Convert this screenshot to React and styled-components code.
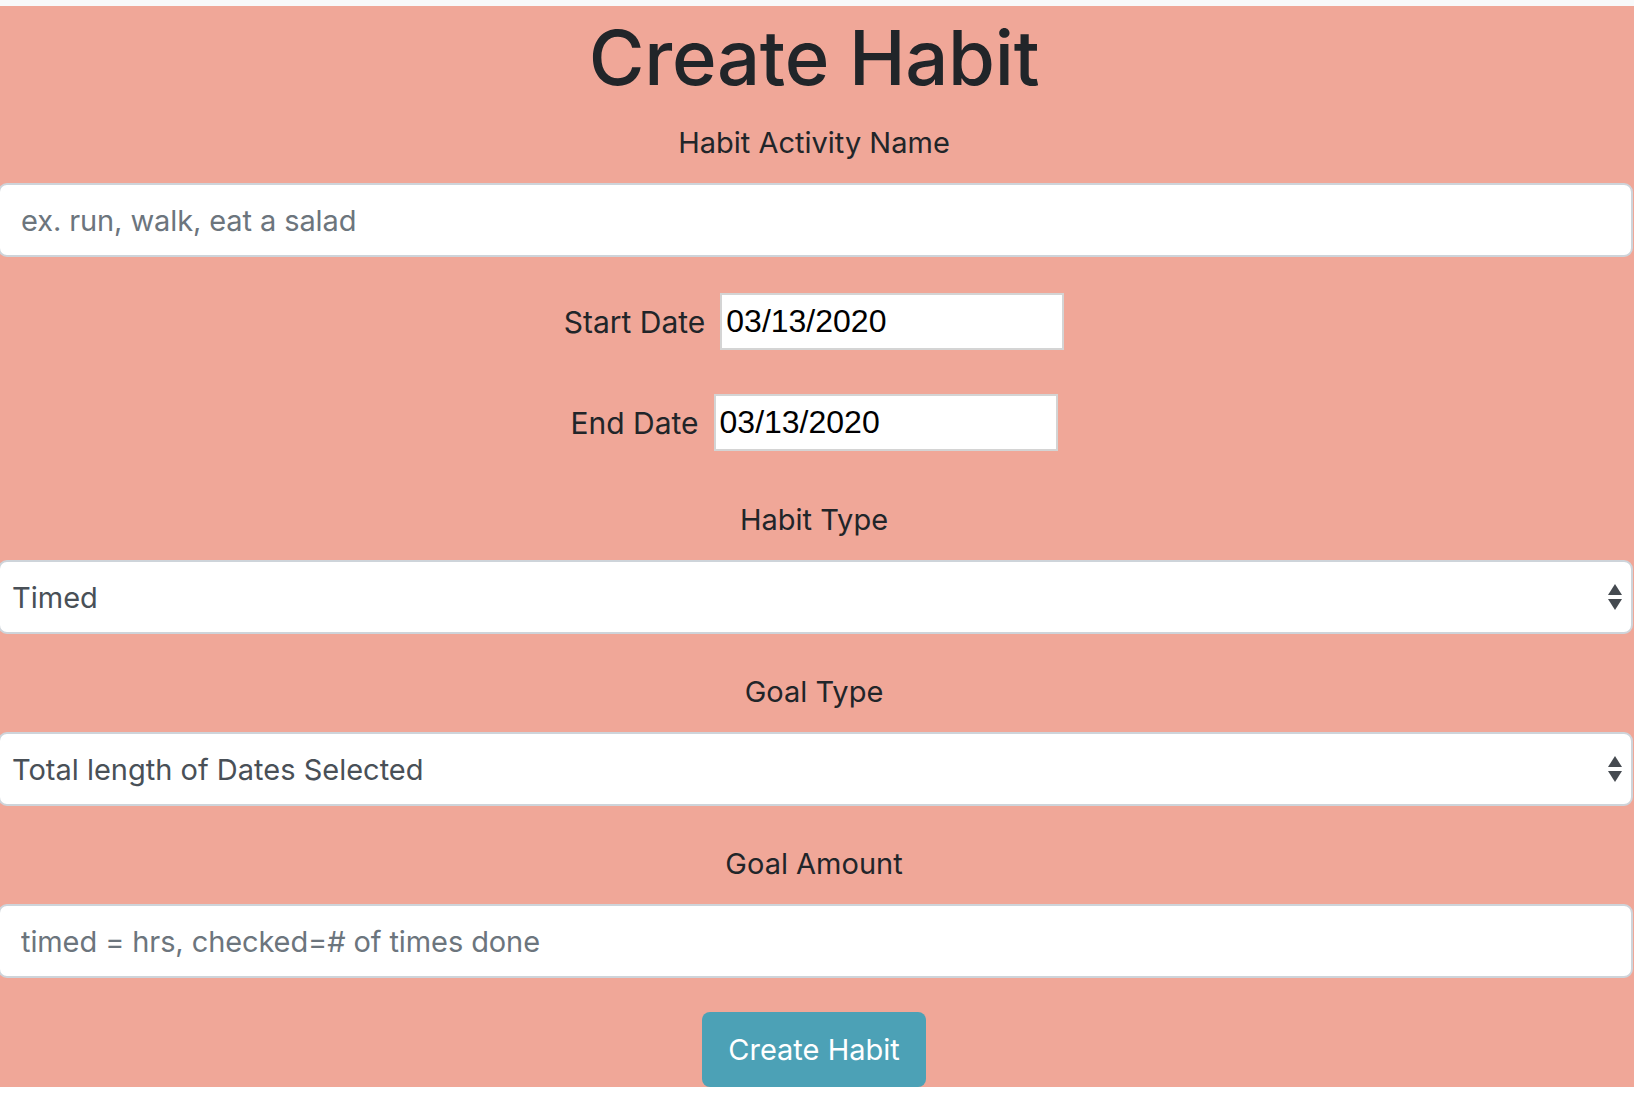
import React from 'react';
import styled, { createGlobalStyle } from 'styled-components';

const GlobalStyle = createGlobalStyle`
    html, body {
        margin: 0;
        padding: 0;
        background: #ffffff;
        font-family: Inter, "Noto Sans", sans-serif;
        color: #212529;
        overflow: hidden;
    }
    * {
        box-sizing: border-box;
    }
`;

const TopStrip = styled.div`
    height: 6px;
    background: #f8f9fa;
`;

const Form = styled.form`
    display: flex;
    flex-direction: column;
    align-items: center;
    background: #f0a798;
    margin: 0;
    padding-right: 6px;
`;

const Title = styled.h1`
    margin: 0;
    height: 100px;
    line-height: 102px;
    font-size: 76px;
    font-weight: 500;
    letter-spacing: -0.3px;
    color: #212529;
`;

const Label = styled.label`
    display: block;
    margin-top: ${(props) => props.top || 0}px;
    height: 36px;
    line-height: 36px;
    font-size: 29px;
    font-weight: 400;
    color: #212529;
    text-align: center;
`;

const TextInput = styled.input`
    display: block;
    width: calc(100% + 7px);
    margin: 22px -5px 0 -2px;
    height: 74px;
    padding: 0 21px;
    border: 2px solid #ced4da;
    border-radius: 9px;
    background: #ffffff;
    font-family: Inter, "Noto Sans", sans-serif;
    font-size: 29px;
    letter-spacing: -0.1px;
    color: #495057;
    outline: none;

    &::placeholder {
        color: #6c757d;
        opacity: 1;
    }
`;

const SelectWrap = styled.div`
    position: relative;
    width: calc(100% + 7px);
    margin: 22px -5px 0 -2px;
`;

const Select = styled.select`
    display: block;
    width: 100%;
    height: 74px;
    padding: 0 12px;
    border: 2px solid #ced4da;
    border-radius: 9px;
    background: #ffffff;
    appearance: none;
    font-family: Inter, "Noto Sans", sans-serif;
    font-size: 29px;
    color: #495057;
    outline: none;
`;

const SelectArrows = styled.svg`
    position: absolute;
    right: 10px;
    top: 50%;
    transform: translateY(-50%);
    pointer-events: none;
`;

const DateRow = styled.div`
    display: flex;
    align-items: center;
    gap: 15px;
    margin-top: ${(props) => props.top}px;
`;

const DateLabel = styled.label`
    font-size: 30px;
    color: #212529;
`;

const DateInput = styled.input`
    width: 344px;
    height: 57px;
    padding: 0 4px;
    border: 2px solid #d4d4d4;
    border-radius: 0;
    background: #ffffff;
    font-family: "Liberation Sans", Arial, sans-serif;
    font-size: 32px;
    color: #000000;
    outline: none;
`;

const SubmitButton = styled.button`
    margin-top: 34px;
    height: 75px;
    padding: 0 26px;
    border: none;
    border-radius: 8px;
    background: #4ca1b6;
    color: #ffffff;
    font-family: Inter, "Noto Sans", sans-serif;
    font-size: 29px;
    cursor: pointer;
`;

const Arrows = () => (
    <SelectArrows width="16" height="28" viewBox="0 0 16 28">
        <path d="M8 1 L15 12 L1 12 Z" fill="#454a50" />
        <path d="M1 16 L15 16 L8 27 Z" fill="#454a50" />
    </SelectArrows>
);

const App = () => {
    return (
        <>
            <GlobalStyle />
            <TopStrip />
            <Form onSubmit={(e) => e.preventDefault()}>
                <Title>Create Habit</Title>
                <Label top={19}>Habit Activity Name</Label>
                <TextInput placeholder="ex. run, walk, eat a salad" />

                <DateRow top={36}>
                    <DateLabel>Start Date</DateLabel>
                    <DateInput defaultValue="03/13/2020" />
                </DateRow>
                <DateRow top={44}>
                    <DateLabel>End Date</DateLabel>
                    <DateInput defaultValue="03/13/2020" />
                </DateRow>

                <Label top={51}>Habit Type</Label>
                <SelectWrap>
                    <Select defaultValue="timed">
                        <option value="timed">Timed</option>
                        <option value="checked">Checked</option>
                    </Select>
                    <Arrows />
                </SelectWrap>

                <Label top={40}>Goal Type</Label>
                <SelectWrap>
                    <Select defaultValue="total">
                        <option value="total">Total length of Dates Selected</option>
                        <option value="daily">Daily</option>
                    </Select>
                    <Arrows />
                </SelectWrap>

                <Label top={40}>Goal Amount</Label>
                <TextInput placeholder="timed = hrs, checked=# of times done" />

                <SubmitButton type="submit">Create Habit</SubmitButton>
            </Form>
        </>
    );
};

export default App;
